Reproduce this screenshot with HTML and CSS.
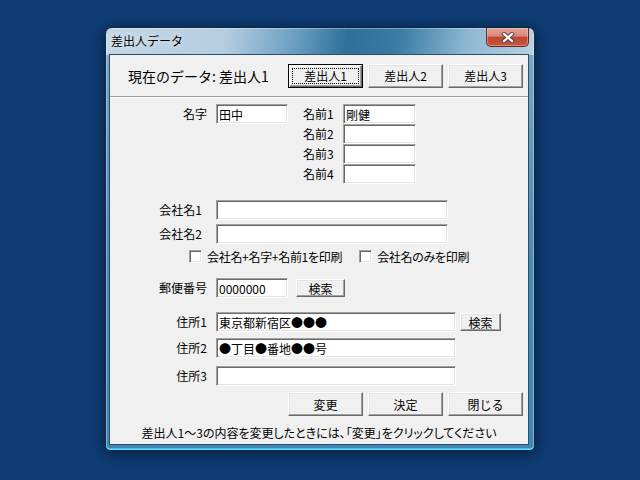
FILE: index.html
```html
<!DOCTYPE html>
<html lang="ja">
<head>
  <meta charset="UTF-8" />
  <meta name="viewport" content="width=device-width, initial-scale=1.0"/>
  <title>差出人データ</title>
  <link rel="stylesheet" href="styles.css">
</head>
<body>
  <div class="window">
    <div class="titlebar">
      <span class="title">差出人データ</span>
      <button class="close-button" aria-label="閉じる">
        <svg width="14" height="11" viewBox="0 0 14 11">
          <path d="M3 2 L11 9 M11 2 L3 9" stroke="#5a4444" stroke-width="4.2" stroke-linecap="square"/>
          <path d="M3 2 L11 9 M11 2 L3 9" stroke="#fff" stroke-width="2.2" stroke-linecap="square"/>
        </svg>
      </button>
    </div>

    <div class="client">
      <div class="current-bar">
        <span class="current-label">現在のデータ: 差出人1</span>
        <div class="button-row">
          <button class="btn btn-default"><span class="focus">差出人1</span></button>
          <button class="btn">差出人2</button>
          <button class="btn">差出人3</button>
        </div>
      </div>

      <div class="form">
        <div class="row name-row">
          <label class="label">名字</label>
          <input class="field short" type="text" value="田中" />
          <div class="given-names">
            <label class="sub-label">名前1</label>
            <input class="field given" type="text" value="剛健" />
            <label class="sub-label">名前2</label>
            <input class="field given" type="text" />
            <label class="sub-label">名前3</label>
            <input class="field given" type="text" />
            <label class="sub-label">名前4</label>
            <input class="field given" type="text" />
          </div>
        </div>

        <div class="row company-first">
          <label class="label company-label">会社名1</label>
          <input class="field company" type="text" />
        </div>
        <div class="row company-second">
          <label class="label company-label">会社名2</label>
          <input class="field company" type="text" />
        </div>

        <div class="check-row">
          <input class="check" type="checkbox" />
          <span class="check-text">会社名+名字+名前1を印刷</span>
          <input class="check second-check" type="checkbox" />
          <span class="check-text">会社名のみを印刷</span>
        </div>

        <div class="row zip-row">
          <label class="label">郵便番号</label>
          <input class="field short" type="text" value="0000000" />
          <button class="btn small zip-search">検索</button>
        </div>

        <div class="row address-first">
          <label class="label">住所1</label>
          <input class="field address" type="text" value="東京都新宿区●●●" />
          <button class="btn small address-search">検索</button>
        </div>
        <div class="row address-second">
          <label class="label">住所2</label>
          <input class="field address" type="text" value="●丁目●番地●●号" />
        </div>
        <div class="row address-third">
          <label class="label">住所3</label>
          <input class="field address" type="text" />
        </div>

        <div class="button-row action-row">
          <button class="btn">変更</button>
          <button class="btn">決定</button>
          <button class="btn">閉じる</button>
        </div>

        <p class="message">差出人1～3の内容を変更したときには、「変更」をクリックしてください</p>
      </div>
    </div>
  </div>
</body>
</html>
```

FILE: styles.css
```css
body {
  margin: 0;
  width: 640px;
  height: 480px;
  overflow: hidden;
  box-sizing: border-box;
  padding: 27px 0 0 105px;
  background: #0e3c74;
  font-family: "Noto Sans CJK JP", "Noto Sans", sans-serif;
  font-size: 12px;
  color: #000;
}
.window {
  width: 430px;
  height: 424px;
  box-sizing: border-box;
  padding: 0 5px 5px 3px;
  border: 1px solid #0b2a45;
  border-radius: 7px 7px 5px 5px;
  background:
    linear-gradient(100deg, #c3d7e6 0%, #b4cde0 28%, #6c9fc2 44%, #2f709b 56%, #3a7aa4 68%, #8db8d2 84%, #b7d1e2 100%) top / 100% 27px no-repeat,
    linear-gradient(to bottom, #7eaccb 0%, #4d8db6 50%, #3e87b6 100%);
  box-shadow:
    inset 0 0 0 1px rgba(255, 255, 255, 0.35),
    inset 0 -2px 0 #34c1f2,
    0 2px 14px rgba(0, 0, 0, 0.55);
}
.titlebar {
  height: 26px;
  display: flex;
  align-items: center;
}
.title {
  padding-left: 2px;
  line-height: 14px;
  text-shadow: 0 0 6px rgba(255, 255, 255, 0.9);
}
.close-button {
  margin-left: auto;
  align-self: flex-start;
  width: 43px;
  height: 19px;
  padding: 0;
  display: flex;
  align-items: center;
  justify-content: center;
  border: 1px solid #5e2a26;
  border-top: none;
  border-radius: 0 0 5px 5px;
  background: linear-gradient(to bottom, #e3a79c 0%, #d5877a 45%, #bd4632 52%, #c8563d 100%);
  box-shadow: inset 0 0 0 1px rgba(255, 200, 190, 0.45);
}
.client {
  height: 391px;
  box-sizing: border-box;
  border: 1px solid #2f4e66;
  background: #f0f0f0;
}
.current-bar {
  height: 41px;
  display: flex;
  align-items: center;
  border-bottom: 1px solid #a0a0a0;
  box-shadow: 0 1px 0 #fff;
}
.current-label {
  margin-left: 18px;
  font-size: 14px;
  line-height: 16px;
}
.button-row {
  margin-left: auto;
  padding-right: 5px;
  display: flex;
  gap: 5px;
}
.btn {
  width: 75px;
  height: 24px;
  padding: 0;
  font-family: inherit;
  font-size: 12px;
  color: #000;
  background: #f0f0f0;
  border: 1px solid;
  border-color: #fff #696969 #696969 #fff;
  box-shadow: inset -1px -1px 0 #a0a0a0, inset 1px 1px 0 #e3e3e3;
}
.btn-default {
  padding: 3px;
  border-color: #000;
  box-shadow: inset 1px 1px 0 #fff, inset -1px -1px 0 #696969, inset -2px -2px 0 #a0a0a0;
}
.focus {
  display: flex;
  align-items: center;
  justify-content: center;
  height: 100%;
  box-sizing: border-box;
  border: 1px dotted #000;
}
.form {
  padding-top: 7px;
}
.row {
  display: flex;
  align-items: center;
}
.name-row {
  align-items: flex-start;
}
.label {
  width: 106px;
  box-sizing: border-box;
  padding-right: 9px;
  text-align: right;
  line-height: 20px;
}
.company-label {
  padding-right: 14px;
}
.field {
  height: 20px;
  box-sizing: border-box;
  margin: 0;
  padding: 0 2px;
  font-family: inherit;
  font-size: 12px;
  color: #000;
  background: #fff;
  border: 1px solid;
  border-color: #a0a0a0 #fff #fff #a0a0a0;
  box-shadow: inset 1px 1px 0 #696969, inset -1px -1px 0 #e3e3e3;
  outline: none;
}
.short {
  width: 72px;
}
.given-names {
  margin-left: 15px;
  display: grid;
  grid-template-columns: 40px 73px;
  grid-auto-rows: 20px;
  align-items: center;
}
.sub-label {
  line-height: 20px;
}
.given {
  width: 73px;
}
.company {
  width: 232px;
}
.company-first {
  margin-top: 16px;
}
.company-second {
  margin-top: 4px;
}
.check-row {
  margin-top: 6px;
  padding-left: 79px;
  height: 13px;
  display: flex;
  align-items: center;
}
.check {
  appearance: none;
  width: 13px;
  height: 13px;
  margin: 0 5px 0 0;
  box-sizing: border-box;
  background: #fff;
  border: 1px solid;
  border-color: #a0a0a0 #fff #fff #a0a0a0;
  box-shadow: inset 1px 1px 0 #696969, inset -1px -1px 0 #e3e3e3;
}
.second-check {
  margin-left: 17px;
}
.check-text {
  line-height: 13px;
  font-feature-settings: "palt";
  letter-spacing: -0.3px;
}
.zip-row {
  margin-top: 15px;
}
.small {
  height: 18px;
}
.zip-search {
  width: 49px;
  margin-left: 8px;
}
.address {
  width: 240px;
}
.address-first {
  margin-top: 14px;
}
.address-search {
  width: 41px;
  margin-left: 4px;
}
.address-second {
  margin-top: 6px;
}
.address-third {
  margin-top: 8px;
}
.action-row {
  margin-top: 6px;
  justify-content: flex-end;
}
.message {
  margin: 9px 0 0;
  line-height: 16px;
  text-align: center;
  font-feature-settings: "palt";
}
```
